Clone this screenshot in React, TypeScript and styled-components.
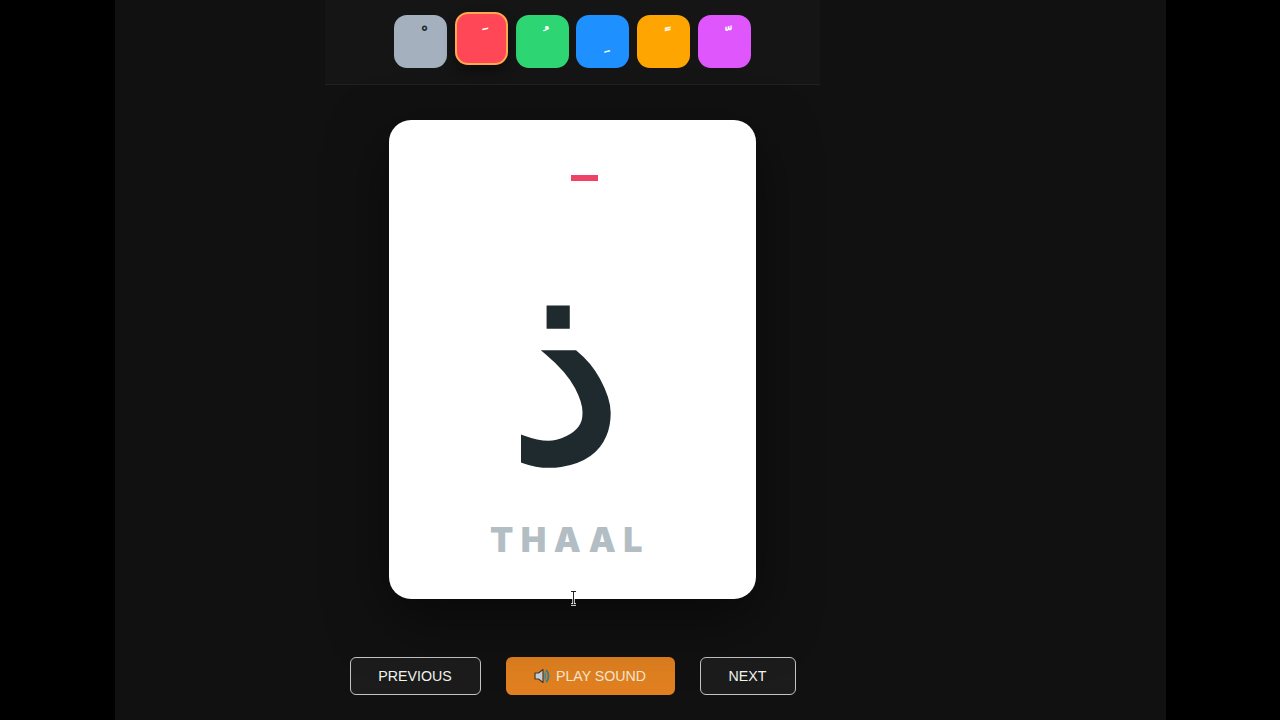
import styled, { createGlobalStyle } from 'styled-components';

const swatches = [
  { color: '#a4b0be', mark: 'ْ', dark: true, low: false, active: false },
  { color: '#ff4757', mark: 'َ', dark: false, low: false, active: true },
  { color: '#2ed573', mark: 'ُ', dark: false, low: false, active: false },
  { color: '#1e90ff', mark: 'ِ', dark: false, low: true, active: false },
  { color: '#ffa502', mark: 'ً', dark: false, low: false, active: false },
  { color: '#e056fd', mark: 'ّ', dark: false, low: false, active: false },
];

const App = () => (
  <>
    <GlobalStyle />
    <Stage>
      <Column>
        <Toolbar>
          {swatches.map((swatch) => (
            <Swatch key={swatch.color} $color={swatch.color} $active={swatch.active}>
              <Mark $dark={swatch.dark} $low={swatch.low}>{'\u00a0' + swatch.mark}</Mark>
            </Swatch>
          ))}
        </Toolbar>
        <Card>
          <Harakah />
          <Letter>ذ</Letter>
          <LetterName>THAAL</LetterName>
          <TextCursor width="9" height="16" viewBox="0 0 9 16">
            <path d="M2 1.500h5M4.500 1.500v13M2 14.500h5" stroke="#fff" strokeWidth="2.400" fill="none" />
            <path d="M2 1.500h5M4.500 1.500v13M2 14.500h5" stroke="#222" strokeWidth="1" fill="none" />
          </TextCursor>
        </Card>
        <Controls>
          <OutlineButton $width={131}>PREVIOUS</OutlineButton>
          <SoundButton>
            <svg width="17" height="16" viewBox="0 0 17 16">
              <path d="M1 5h3.500L9 1.500v13L4.500 11H1z" fill="#c9d1d6" stroke="#4a3a2c" strokeWidth="1.200" strokeLinejoin="round" />
              <path d="M10.500 3.500c2.500 2.500 2.500 6.500 0 9z" fill="#2f8fa8" />
              <path d="M12 2c3.500 3.200 3.500 8.800 0 12" stroke="#2a7f9a" strokeWidth="1.800" fill="none" />
            </svg>
            PLAY SOUND
          </SoundButton>
          <OutlineButton $width={96}>NEXT</OutlineButton>
        </Controls>
      </Column>
    </Stage>
  </>
);

export default App;

const GlobalStyle = createGlobalStyle`
  html, body {
    margin: 0;
    height: 100%;
    background: #000;
    overflow: hidden;
  }
  * {
    box-sizing: border-box;
  }
`;

const Stage = styled.main`
  width: 1051px;
  height: 720px;
  margin-left: 115px;
  padding-left: 210px;
  background: #111111;
`;

const Column = styled.div`
  width: 495px;
  display: flex;
  flex-direction: column;
  align-items: center;
`;

const Toolbar = styled.div`
  width: 100%;
  height: 85px;
  padding-bottom: 1px;
  display: flex;
  align-items: center;
  justify-content: center;
  gap: 7.8px;
  background: #151515;
  border-bottom: 1px solid #212121;
`;

const Swatch = styled.div<{ $color: string; $active: boolean }>`
  width: 53px;
  height: 53px;
  border-radius: 13px;
  display: flex;
  justify-content: center;
  background: ${(p) => p.$color};
  ${(p) =>
    p.$active &&
    `
    transform: translateY(-3px);
    border: 2px solid #ffa94d;
    box-shadow: 0 6px 12px rgba(0, 0, 0, 0.4);
  `}
`;

const Mark = styled.span<{ $dark: boolean; $low: boolean }>`
  font-family: 'DejaVu Sans', sans-serif;
  font-size: 20px;
  font-weight: 700;
  line-height: 1;
  height: 20px;
  margin: ${(p) => (p.$low ? '18px' : '11px')} 0 0 5px;
  color: ${(p) => (p.$dark ? '#1f2a33' : '#ffffff')};
`;

const Card = styled.section`
  position: relative;
  width: 367px;
  height: 479px;
  margin-top: 35px;
  display: flex;
  flex-direction: column;
  align-items: center;
  background: #ffffff;
  border-radius: 22px;
  box-shadow: 0 20px 60px rgba(0, 0, 0, 0.5);
`;

const Harakah = styled.div`
  width: 27px;
  height: 6px;
  margin: 55px 0 0 23px;
  background: #ee4266;
`;

const Letter = styled.div`
  height: 290px;
  margin: 34px 0 0 -14px;
  font-family: 'Noto Sans', sans-serif;
  font-size: 262px;
  line-height: 290px;
  color: #1f2a2e;
  -webkit-text-stroke: 4px #1f2a2e;
`;

const LetterName = styled.div`
  margin: 15px 0 0 -5px;
  font-family: Inter, sans-serif;
  font-weight: 900;
  font-size: 34px;
  line-height: 40px;
  letter-spacing: 7.5px;
  color: #b2bec3;
`;

const TextCursor = styled.svg`
  position: absolute;
  left: 180px;
  bottom: -7px;
`;

const Controls = styled.div`
  margin-top: 58px;
  display: flex;
  gap: 25px;
`;

const OutlineButton = styled.button<{ $width: number }>`
  width: ${(p) => p.$width}px;
  height: 38px;
  padding: 0;
  background: #1c1c1c;
  border: 1px solid #c4c4c4;
  border-radius: 6px;
  color: #f1f5ee;
  font-family: 'Liberation Sans', Arial, sans-serif;
  font-size: 14.2px;
`;

const SoundButton = styled.button`
  width: 169px;
  height: 38px;
  padding: 0;
  display: flex;
  align-items: center;
  justify-content: center;
  gap: 5px;
  background: #e08020;
  border: none;
  border-radius: 6px;
  color: #f6e6d2;
  font-family: 'Liberation Sans', Arial, sans-serif;
  font-size: 14.2px;
`;
